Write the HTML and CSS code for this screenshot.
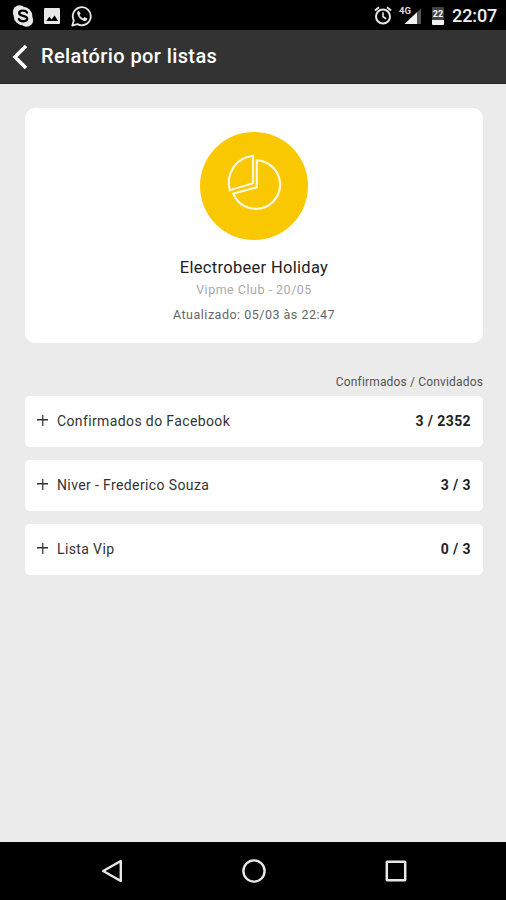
FILE: index.html
```html
<!DOCTYPE html>
<html lang="pt-BR">
<head>
<meta charset="utf-8">
<title>Relatório por listas</title>
<link rel="stylesheet" href="styles.css">
</head>
<body>
<div class="screen">
  <div class="status">
    <svg class="skype" width="22" height="24" viewBox="0 0 22 24"><circle cx="7.5" cy="8" r="6.7" fill="#e8e8e8"/><circle cx="14.5" cy="16" r="6.7" fill="#e8e8e8"/><circle cx="11" cy="12" r="9.3" fill="#e8e8e8"/><path d="M15 8.6C14 6.2 7.2 5.8 7.2 9.2c0 3.2 8 2 8 5.3 0 3.6-7 3.6-8.4.5" fill="none" stroke="#000" stroke-width="2.3" stroke-linecap="round"/></svg>
    <svg class="photo" width="16" height="16" viewBox="0 0 16 16"><rect width="16" height="16" rx="1" fill="#e8e8e8"/><path d="M2.2 13l3.2-4.2 2.2 2.6 3-3.9 3.6 5.5z" fill="#000"/></svg>
    <svg class="whats" width="22" height="22" viewBox="0 0 22 22"><path d="M1.3 20.6l1.5-5.2a9 9 0 1 1 3.6 3.7z" fill="none" stroke="#e8e8e8" stroke-width="1.8" stroke-linejoin="round"/><path d="M7.7 5.8c-1.6.8-1.9 2.3-.9 4.4 1.5 3 3.5 4.8 6.3 5.7 1.7.4 3.1-.6 3.3-2.4l-2.9-1.6-1.4 1.5c-1.6-.7-2.9-2-3.6-3.5l1.2-1.3z" fill="#e8e8e8"/></svg>
    <span class="spacer"></span>
    <svg class="alarm" width="18" height="19" viewBox="0 0 18 19"><g fill="none" stroke="#e8e8e8" stroke-width="2"><circle cx="9" cy="10.5" r="7"/><path d="M1 4.600l4-3.300M17 4.600l-4-3.300"/><path d="M9 6.300v4.500l3.200 2" stroke-width="1.6"/></g></svg>
    <div class="signal">
      <svg width="22" height="19" viewBox="0 0 22 19"><path d="M21 2.500V18H4.500z" fill="#555"/><path d="M17 6.300V18H4.500z" fill="#f2f2f2"/></svg>
      <span class="net">4G</span>
    </div>
    <div class="battery"><span class="level">22</span></div>
    <span class="clock">22:07</span>
  </div>
  <header class="header">
    <svg width="16" height="26" viewBox="0 0 16 26"><path d="M14 2L3 13l11 11" fill="none" stroke="#fff" stroke-width="3.6"/></svg>
    <h1>Relatório por listas</h1>
  </header>
  <main class="content">
    <section class="card">
      <div class="disc">
        <svg width="108" height="108" viewBox="0 0 108 108"><g fill="none" stroke="#fff8df" stroke-width="2.2" stroke-linejoin="miter"><path d="M53 23.800V51.200L29.800 58.200A26.200 27 0 0 1 53 23.800z"/><path d="M56.800 28.300V55.200L33.300 61.800A24.300 24.300 0 1 0 56.800 28.300z"/></g></svg>
      </div>
      <h2>Electrobeer Holiday</h2>
      <p class="venue">Vipme Club - 20/05</p>
      <p class="updated">Atualizado: 05/03 às 22:47</p>
    </section>
    <div class="caption">Confirmados / Convidados</div>
    <ul class="lists">
      <li><i class="plus"></i><span class="name">Confirmados do Facebook</span><b>3 / 2352</b></li>
      <li><i class="plus"></i><span class="name">Niver - Frederico Souza</span><b>3 / 3</b></li>
      <li><i class="plus"></i><span class="name">Lista Vip</span><b>0 / 3</b></li>
    </ul>
  </main>
  <nav class="nav">
    <svg width="22" height="24" viewBox="0 0 22 24"><path d="M19.800 2v20L2.200 12z" fill="none" stroke="#e8e8e8" stroke-width="2.4" stroke-linejoin="round"/></svg>
    <svg width="24" height="24" viewBox="0 0 24 24"><circle cx="12" cy="12" r="10.6" fill="none" stroke="#e8e8e8" stroke-width="2.4"/></svg>
    <svg width="22" height="22" viewBox="0 0 22 22"><rect x="1.800" y="1.800" width="18.400" height="18.400" rx=".5" fill="none" stroke="#e8e8e8" stroke-width="2.5"/></svg>
  </nav>
</div>
</body>
</html>
```
FILE: styles.css
```css
* { box-sizing: border-box; margin: 0; padding: 0; }
body { font-family: Roboto, "Liberation Sans", sans-serif; background: #ebebeb; }
svg { display: block; flex: none; }
.screen { width: 506px; height: 900px; display: flex; flex-direction: column; overflow: hidden; }
.status { height: 30px; background: #000; display: flex; align-items: center; padding: 1px 9px 0 12px; }
.photo { margin-left: 10px; }
.whats { margin-left: 11px; }
.spacer { flex: 1; }
.signal { position: relative; margin-left: 8px; }
.net { position: absolute; left: -1px; top: -1px; font-size: 9.5px; line-height: 11px; font-weight: 700; color: #ddd; }
.battery { width: 12px; height: 18px; margin-left: 10px; background: linear-gradient(#444 0 13px, #f2f2f2 13px); border-radius: 1px; display: flex; justify-content: center; }
.level { font-size: 9px; line-height: 15px; font-weight: 700; color: #fff; }
.clock { margin-left: 8px; width: 45px; font-size: 18px; line-height: 28px; font-weight: 500; color: #f0f0f0; white-space: nowrap; letter-spacing: -0.1px; }
.header { height: 54px; background: #333; border-bottom: 1px solid #222; display: flex; align-items: center; padding: 1px 0 0 12px; color: #fff; }
.header h1 { margin: -2px 0 0 13px; font-size: 20px; line-height: 26px; font-weight: 500; letter-spacing: 0.4px; white-space: nowrap; }
.content { flex: 1; padding: 24px 23px 0 25px; }
.card { height: 235px; background: #fff; border-radius: 10px; padding-top: 24px; display: flex; flex-direction: column; align-items: center; }
.disc { width: 108px; height: 108px; border-radius: 50%; background: #fac800; }
.card h2 { margin-top: 16px; font-size: 16.5px; line-height: 24px; font-weight: 400; color: #222; letter-spacing: 0.3px; }
.venue { margin-top: 1px; font-size: 12.5px; line-height: 18px; color: #aaa; letter-spacing: 0.5px; }
.updated { margin-top: 7px; font-size: 12.5px; line-height: 18px; color: #666; letter-spacing: 0.5px; }
.caption { height: 53px; padding-top: 31px; text-align: right; font-size: 12px; line-height: 16px; letter-spacing: 0.16px; color: #555; }
.lists { list-style: none; display: flex; flex-direction: column; gap: 13px; }
.lists li { height: 51px; background: #fff; border-radius: 5px; display: flex; align-items: center; padding: 0 12px 2px; font-size: 14px; color: #333; }
.plus { width: 11px; height: 11px; margin: -1px 9px 0 0; background: linear-gradient(#333, #333) center / 11px 1.5px no-repeat, linear-gradient(#555, #555) center / 1.5px 11px no-repeat; }
.name { flex: 1; letter-spacing: 0.38px; }
.lists b { font-weight: 700; color: #222; letter-spacing: 0.4px; }
.nav { height: 58px; background: #000; display: flex; justify-content: space-between; align-items: center; padding: 0 99px 0 101px; }
```
